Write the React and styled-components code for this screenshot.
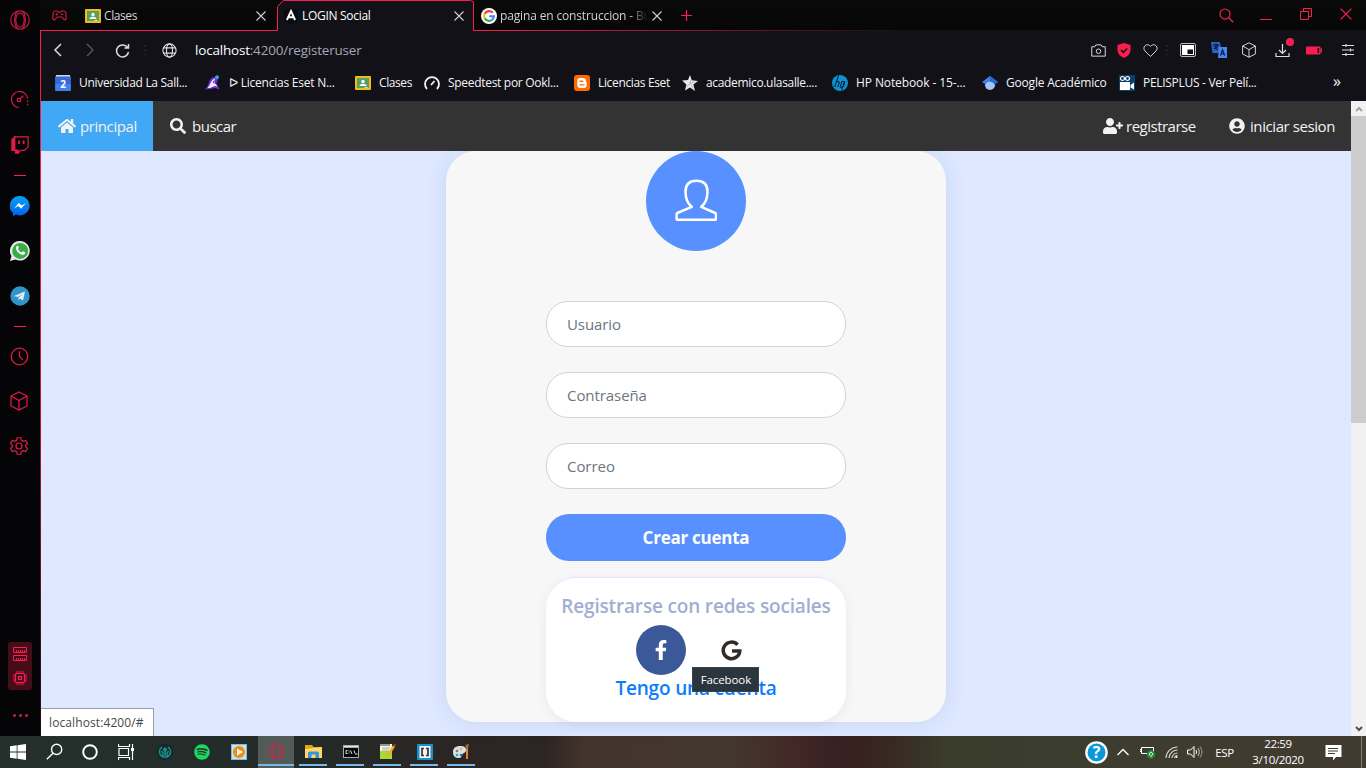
import React from 'react';
import styled, { createGlobalStyle } from 'styled-components';
import { FaHome, FaSearch, FaUserPlus, FaUserCircle, FaFacebookF, FaSpotify } from 'react-icons/fa';

const PINK = '#fa1e4e';

const Global = createGlobalStyle`
  *, *::before, *::after { box-sizing: border-box; }
  body { margin: 0; overflow: hidden; font-family: "Open Sans", "Noto Sans", sans-serif; }
  svg { display: block; flex: none; }
`;

const Screen = styled.div`
  width: 1366px;
  height: 768px;
  display: flex;
  flex-direction: column;
  overflow: hidden;
`;

const Browser = styled.div`
  flex: 1;
  min-height: 0;
  display: flex;
  background: #060608;
`;

const Sidebar = styled.aside`
  width: 40px;
  display: flex;
  flex-direction: column;
  background: #050507;
  color: #e31b47;
`;

const SideSlot = styled.div`
  height: ${(p) => p.$h}px;
  margin-top: ${(p) => p.$gap || 0}px;
  padding-right: ${(p) => p.$shift || 0}px;
  display: flex;
  align-items: center;
  justify-content: center;
`;

const Dash = styled.span`
  width: 12px;
  height: 1px;
  background: ${PINK};
`;

const Monitor = styled.div`
  margin: auto auto 0 8px;
  width: 24px;
  height: 48px;
  border-radius: 3px;
  background: #450c19;
  color: ${PINK};
  display: flex;
  flex-direction: column;
  align-items: center;
  justify-content: space-around;
`;

const MoreDots = styled.div`
  height: 46px;
  display: flex;
  align-items: center;
  justify-content: center;
  gap: 3px;
  padding-top: 5px;
  span { width: 3px; height: 3px; border-radius: 50%; background: #d01b42; }
`;

const Main = styled.div`
  flex: 1;
  min-width: 0;
  display: flex;
  flex-direction: column;
`;

const TabBar = styled.div`
  position: relative;
  height: 31px;
  display: flex;
  align-items: center;
  background: linear-gradient(#09090a, #070708);
  &::after {
    content: '';
    position: absolute;
    left: 0; right: 0; bottom: 0;
    height: 1px;
    background: linear-gradient(90deg, ${PINK} 0, ${PINK} 430px, #131218 860px);
  }
`;

const GxButton = styled.div`
  width: 38px;
  display: flex;
  justify-content: center;
  color: #cf1d44;
`;

const Tab = styled.div`
  position: relative;
  z-index: ${(p) => (p.$active ? 1 : 0)};
  width: ${(p) => p.$w}px;
  height: 31px;
  padding: 0 0 0 ${(p) => p.$pad}px;
  display: flex;
  align-items: center;
  color: ${(p) => (p.$active ? '#fff' : '#d2d2d5')};
  background: ${(p) => (p.$active ? '#121118' : 'transparent')};
  clip-path: ${(p) => (p.$active ? 'polygon(0 6px, 6px 0, 100% 0, 100% 100%, 0 100%)' : 'none')};
`;

const TabOutline = styled.svg`
  position: absolute;
  inset: 0;
`;

const TabTitle = styled.span`
  flex: 1;
  margin-left: 3px;
  overflow: hidden;
  white-space: nowrap;
  font-size: 12px;
  letter-spacing: ${(p) => p.$ls || 0}px;
  mask-image: ${(p) => (p.$fade ? 'linear-gradient(90deg, #000 128px, transparent 148px)' : 'none')};
`;

const TabClose = styled.span`
  width: 12px;
  margin-right: ${(p) => p.$right}px;
  color: #d0d0d4;
`;

const WindowButtons = styled.div`
  margin-left: auto;
  display: flex;
  color: ${PINK};
  > span { width: 40px; display: flex; justify-content: center; }
`;

const Toolbar = styled.div`
  height: 38px;
  display: flex;
  align-items: center;
  background: #121118;
  color: #dcdce0;
`;

const Slot = styled.div`
  position: relative;
  width: ${(p) => p.$w}px;
  height: 100%;
  display: flex;
  align-items: center;
  justify-content: center;
  color: ${(p) => p.$color || 'inherit'};
`;

const Url = styled.div`
  flex: 1;
  margin-left: 7px;
  font-size: 13.5px;
  letter-spacing: -0.2px;
  color: #a4a8b5;
  white-space: nowrap;
  b { font-weight: 400; color: #fff; }
`;

const Alert = styled.i`
  position: absolute;
  left: 21px;
  top: 7px;
  width: 8px;
  height: 8px;
  border-radius: 50%;
  background: ${PINK};
`;

const Bookmarks = styled.div`
  height: 32px;
  padding: 0 0 5px 14px;
  display: flex;
  align-items: center;
  background: #121118;
  color: #f4f4f6;
`;

const Bookmark = styled.div`
  width: ${(p) => p.$w}px;
  display: flex;
  align-items: center;
  gap: 8px;
  white-space: nowrap;
  font-size: 12px;
  line-height: 16px;
  letter-spacing: ${(p) => p.$ls}px;
`;

const More = styled.span`
  margin: -3px 25px 0 auto;
  font-size: 16px;
`;

const Viewport = styled.div`
  flex: 1;
  min-height: 0;
  display: flex;
`;

const Page = styled.div`
  position: relative;
  flex: 1;
  display: flex;
  flex-direction: column;
  background: #dee8ff;
`;

const Nav = styled.nav`
  position: relative;
  height: 50px;
  display: flex;
  background: #333;
`;

const NavLink = styled.a`
  width: ${(p) => p.$w}px;
  padding-left: ${(p) => p.$pad}px;
  margin-left: ${(p) => (p.$push ? 'auto' : 0)};
  display: flex;
  align-items: center;
  gap: ${(p) => p.$gap}px;
  font-size: 15px;
  letter-spacing: ${(p) => p.$ls || 0}px;
  white-space: nowrap;
  color: #f2f2f2;
  background: ${(p) => (p.$active ? '#40a8f5' : 'transparent')};
`;

const Card = styled.main`
  width: 500px;
  height: 571px;
  margin: 0 auto;
  display: flex;
  flex-direction: column;
  align-items: center;
  border-radius: 30px;
  background: #f7f7f7;
  box-shadow: 0 0 20px rgba(60, 110, 190, 0.14);
`;

const Avatar = styled.div`
  width: 100px;
  height: 100px;
  margin-bottom: 50px;
  padding-bottom: 3px;
  border-radius: 50%;
  background: #5891ff;
  display: flex;
  align-items: center;
  justify-content: center;
`;

const Field = styled.input`
  width: 300px;
  height: 46px;
  margin: 0 0 25px;
  padding: 0 20px 1px;
  border: 1px solid #ced4da;
  border-radius: 22px;
  outline: none;
  background: #fff;
  font: 15px "Open Sans", sans-serif;
  letter-spacing: ${(p) => p.$ls || 0}px;
  &::placeholder { color: #6c757d; opacity: 1; }
`;

const Submit = styled.button`
  width: 300px;
  height: 47px;
  margin: 0 0 16px;
  padding: 0;
  border: 0;
  border-radius: 23px;
  background: #5891ff;
  color: #fff;
  font: 700 17px "Open Sans", sans-serif;
  letter-spacing: -0.25px;
`;

const Social = styled.section`
  width: 300px;
  height: 145px;
  padding-top: 15px;
  display: flex;
  flex-direction: column;
  align-items: center;
  border-radius: 30px;
  border-top: 1px solid #dee8ff;
  background: #fff;
  box-shadow: 0 3px 12px rgba(0, 0, 0, 0.06);
`;

const SocialTitle = styled.h2`
  margin: 0;
  height: 32px;
  line-height: 26px;
  font-size: 19px;
  font-weight: 600;
  letter-spacing: -0.17px;
  white-space: nowrap;
  color: #a2aed0;
`;

const SocialRow = styled.div`
  display: flex;
  gap: 20px;
`;

const SocialButton = styled.a`
  width: 50px;
  height: 50px;
  border-radius: 50%;
  display: flex;
  align-items: center;
  justify-content: center;
  background: ${(p) => p.$bg};
  color: ${(p) => p.$fg};
`;

const AccountLink = styled.a`
  position: relative;
  line-height: 26px;
  font-size: 19px;
  font-weight: 600;
  letter-spacing: -0.17px;
  white-space: nowrap;
  color: #0a7cff;
`;

const Tooltip = styled.div`
  position: absolute;
  left: 77px;
  top: -8px;
  width: 67px;
  height: 25px;
  border: 1px solid #3a444d;
  background: #2b353d;
  color: #fff;
  font-size: 11.5px;
  font-weight: 400;
  letter-spacing: -0.1px;
  line-height: 23px;
  text-align: center;
`;

const Status = styled.div`
  position: absolute;
  left: 0;
  bottom: 0;
  width: 113px;
  height: 28px;
  padding-left: 8px;
  border: solid #979ca8;
  border-width: 1px 1px 0 0;
  background: #fff;
  color: #484848;
  font-size: 12px;
  line-height: 28px;
  letter-spacing: 0.1px;
`;

const Edge = styled.div`
  width: 1px;
  background: linear-gradient(${PINK} 0, #d61c45 45%, #4a1020 85%, #1d0a10 100%);
`;

const Scrollbar = styled.div`
  width: 15px;
  display: flex;
  flex-direction: column;
  background: #f1f1f1;
`;

const ScrollArrow = styled.div`
  height: 15px;
  display: flex;
  align-items: center;
  justify-content: center;
  color: ${(p) => p.$c};
`;

const Thumb = styled.div`
  height: 307px;
  margin-bottom: auto;
  background: #cdcdcd;
`;

const Taskbar = styled.footer`
  height: 32px;
  display: flex;
  align-items: center;
  color: #fff;
  background: linear-gradient(90deg, #25302c 0, #232b28 300px, #2a2624 440px, #2c2523 545px, #43352b 585px, #44372e 730px,
    #432927 790px, #3a2122 830px, #38201f 860px, #382c23 900px, #393c2b 945px, #3b3d2f 1080px, #403b2f 1250px, #403a30 1366px);
`;

const Task = styled.div`
  position: relative;
  width: ${(p) => p.$w || 37}px;
  height: 32px;
  margin-left: ${(p) => p.$gap || 0}px;
  padding-bottom: 1px;
  display: flex;
  align-items: center;
  justify-content: center;
  background: ${(p) => (p.$active ? '#525b58' : 'transparent')};
  &::after {
    content: '';
    position: absolute;
    bottom: 2px;
    left: ${(p) => (p.$active ? 0 : 4)}px;
    right: ${(p) => (p.$active ? 0 : 5)}px;
    height: 2px;
    background: ${(p) => (p.$open ? '#76b9ed' : 'transparent')};
  }
`;

const Tray = styled.div`
  margin-left: auto;
  height: 32px;
  display: flex;
  align-items: center;
`;

const Lang = styled.span`
  width: 37px;
  text-align: center;
  font-size: 11.5px;
  letter-spacing: -0.3px;
`;

const Clock = styled.div`
  width: 70px;
  height: 32px;
  font-size: 11.5px;
  line-height: 16px;
  letter-spacing: -0.35px;
  text-align: center;
`;

const ShowDesktop = styled.div`
  width: 5px;
  height: 32px;
  border-left: 1px solid #817d75;
`;

const Stroke = ({ s = 16, w = 1.3, vb = 20, children, ...rest }) => (
  <svg width={s} height={s} viewBox={`0 0 ${vb} ${vb}`} fill="none" stroke="currentColor" strokeWidth={w} {...rest}>{children}</svg>
);

const OperaIcon = ({ s = 20, c = PINK }) => (
  <svg width={s} height={s} viewBox="0 0 20 20" fill="none" stroke={c} strokeWidth="1.1">
    <circle cx="10" cy="10" r="9.3" /><ellipse cx="10" cy="10" rx="4.200" ry="7.300" />
    <path d="M8 .9C3.700 3.200 3.400 16 8.200 19M12 .9c4.300 2.300 4.600 15.100-.2 18.100" />
  </svg>
);

const Close = ({ s = 10, w = 1.1 }) => (
  <Stroke s={s} vb={10} w={w}><path d="M.5.5l9 9M9.500.5l-9 9" /></Stroke>
);

const Cube = ({ s }) => (
  <Stroke s={s} w={1.2}><path d="M10 1l8 4v10l-8 4-8-4V5zM2 5l8 4.500L18 5M10 9.500V19" /></Stroke>
);

const ClassroomIcon = () => (
  <svg width="16" height="16" viewBox="0 0 16 16">
    <rect y="1" width="16" height="14" rx="1" fill="#f5ba15" /><rect x="2" y="3" width="12" height="10" fill="#57a063" />
    <circle cx="8" cy="6.500" r="1.700" fill="#fff" /><path d="M4.500 11c0-3 7-3 7 0z" fill="#fff" /><path d="M9.500 12h3v1h-3z" fill="#d5e9d8" />
  </svg>
);

const GoogleIcon = () => (
  <svg width="16" height="16" viewBox="0 0 16 16" fill="none" strokeWidth="2.100">
    <circle cx="8" cy="8" r="8" fill="#fff" />
    <path d="M11.700 4.700A4.900 4.900 0 0 0 3.700 5.800" stroke="#ea4335" />
    <path d="M3.700 5.800a4.900 4.900 0 0 0 0 4.500" stroke="#fbbc05" />
    <path d="M3.700 10.300a4.900 4.900 0 0 0 7.400 1.400" stroke="#34a853" />
    <path d="M11.100 11.700A4.600 4.600 0 0 0 12.800 8.200H8.200" stroke="#4285f4" />
  </svg>
);

const AngularIcon = () => (
  <svg width="16" height="16" viewBox="0 0 16 16">
    <path d="M8 0l7.500 2.700-1.200 10L8 16l-6.300-3.300L.5 2.700z" fill="#080b12" />
    <path d="M3.900 12L8 3l4.100 9M5.500 9.200h5" fill="none" stroke="#fff" strokeWidth="1.900" />
  </svg>
);

const CalendarIcon = () => (
  <svg width="16" height="16" viewBox="0 0 16 16">
    <rect x="1" width="14" height="5" fill="#d5d8df" /><path d="M0 1.500h16l-.3 14.500H.3z" fill="#356ad6" /><path d="M.2 9h15.600l-.2 7H.4z" fill="#417ff0" />
    <text x="8" y="12.500" fontSize="10" fontWeight="700" fill="#fff" textAnchor="middle">2</text>
  </svg>
);

const WizardIcon = () => (
  <svg width="16" height="16" viewBox="0 0 16 16">
    <path d="M0 14.500Q3 12 4 7q1.500-5 6-5l3 2-1.500 4 3 6.500-5-1.500-4 1z" fill="#6a2fd0" />
    <path d="M6 7q1-3 4-3.500L9.500 8l3 3.500-3-.5L5 13H2.500Q5 10.500 6 7z" fill="#f2ecff" />
    <path d="M7.500 6.500L10 5l-1 4z" fill="#8a3bd8" /><circle cx="12" cy="2.200" r="1.900" fill="#27aee5" />
  </svg>
);

const SpeedtestIcon = () => (
  <Stroke s={16} vb={16} w={1.8}><path d="M3 14A7 7 0 1 1 13 14M7 10l3.500-4" /></Stroke>
);

const BloggerIcon = () => (
  <svg width="16" height="16" viewBox="0 0 16 16">
    <rect width="16" height="16" rx="3" fill="#ff6a00" />
    <path d="M6 3h3a3 3 0 0 1 3 3v.5q0 .6.7.8v2.700a3 3 0 0 1-3 3H6.300A3 3 0 0 1 3.300 10V6A3 3 0 0 1 6 3z" fill="#fff" />
    <path d="M6 6.200h2.700M6 9.900h4" stroke="#ff6a00" strokeWidth="1.400" strokeLinecap="round" />
  </svg>
);

const StarIcon = () => (
  <svg width="16" height="16" viewBox="0 0 16 16">
    <path d="M8 0l1.800 5.300L16 6l-4.600 3.600L13 16l-5-3.600L3 15.500l1.400-6L0 5.500l6-.4z" fill="#e9e9ea" />
    <path d="M8 8l1-3M8 8l5-1M8 8l3 5M8 8l-3 4" stroke="#999" strokeWidth=".6" />
  </svg>
);

const HpIcon = () => (
  <svg width="16" height="16" viewBox="0 0 16 16" fill="none">
    <circle cx="8" cy="8" r="8" fill="#0a93d3" />
    <path d="M6.500.5L2.700 12M4.600 6.500h1.600q1.400 0 1 1.300L5.800 12M9.500 15.500l3-9M9.700 6.500h2q1.400 0 1 1.300L11.600 11q-.4 1.200-1.600 1.200H8l2-5.700" stroke="#121118" strokeWidth="1" />
  </svg>
);

const ScholarIcon = () => (
  <svg width="16" height="16" viewBox="0 0 16 16">
    <circle cx="8" cy="10" r="5" fill="#a5c4fa" /><path d="M8 1l8 6-3.500 2.200a5 5 0 0 0-9 0L0 7z" fill="#427fe5" />
    <path d="M8 1l8 6-3.500 2.200Q11 6.500 8 6.500z" fill="#2b67cc" />
  </svg>
);

const CameraFilmIcon = () => (
  <svg width="16" height="16" viewBox="0 0 16 16">
    <rect width="16" height="16" fill="#08426b" /><circle cx="3.500" cy="3.500" r="2" fill="none" stroke="#fff" strokeWidth="1.200" />
    <circle cx="8.500" cy="3.500" r="2" fill="none" stroke="#fff" strokeWidth="1.200" />
    <path d="M1 7h10v8H1zM11.500 10L15 7.500v7l-3.500-2z" fill="#fff" />
  </svg>
);

const bookmarks = [
  [CalendarIcon, 'Universidad La Sall...', 150, -0.3],
  [WizardIcon, 'ᐅ Licencias Eset N...', 150, -0.23],
  [ClassroomIcon, 'Clases', 69, -0.4],
  [SpeedtestIcon, 'Speedtest por Ookl...', 150, -0.3],
  [BloggerIcon, 'Licencias Eset', 108, -0.35],
  [StarIcon, 'academico.ulasalle....', 150, -0.33],
  [HpIcon, 'HP Notebook - 15-...', 150, -0.1],
  [ScholarIcon, 'Google Académico', 137, -0.2],
  [CameraFilmIcon, 'PELISPLUS - Ver Pelí...', 150, -0.3],
];

function SidePanel() {
  return (
    <Sidebar>
      <SideSlot $h={40}><OperaIcon s={20} c="#d41c43" /></SideSlot>
      <SideSlot $h={46} $gap={36} $shift={1}>
        <Stroke s={19}><path d="M9 18.500A8.500 8.500 0 1 1 18.500 9" /><path d="M18.500 11v6" strokeDasharray="1.500 2" /><circle cx="9.500" cy="10.500" r="1.800" /><path d="M11 9l3-3" /></Stroke>
      </SideSlot>
      <SideSlot $h={46}>
        <Stroke s={18}><path d="M4 1h15v11l-4 4h-4l-3 3v-3H4z" /><path d="M1 4l3-3v15h4v3H5v-3H1z" fill="currentColor" /><path d="M9 5v4M14 5v4" strokeWidth="2" /></Stroke>
      </SideSlot>
      <SideSlot $h={15}><Dash /></SideSlot>
      <SideSlot $h={46}>
        <svg width="20" height="20" viewBox="0 0 20 20">
          <defs><linearGradient id="ms" x2="0" y2="1"><stop stopColor="#08a1f5" /><stop offset="1" stopColor="#0062f0" /></linearGradient></defs>
          <path d="M10 0a9.700 9.700 0 1 1-4 18.600L3 20v-3A9.800 9.800 0 0 1 10 0z" fill="url(#ms)" /><path d="M4 12.500l4.800-5.500 3 2.500L16 7l-4.800 5.700L8.300 10z" fill="#fff" />
        </svg>
      </SideSlot>
      <SideSlot $h={44}>
        <svg width="20" height="20" viewBox="0 0 20 20">
          <path d="M10 0a9.800 9.800 0 1 1-4.600 18.500L0 20l1.500-5A9.800 9.800 0 0 1 10 0z" fill="#e8e9e8" /><circle cx="10.200" cy="9.900" r="8" fill="#3aad48" />
          <path d="M6.500 5.200c1-1 1.700-.5 2.300 1.500L8 8.200c.8 1.600 1.900 2.600 3.600 3.400l1.300-1.300c2.300.8 2.600 1.200 2.100 2.300-2 3.900-11-2.600-8.500-7.400z" fill="#fff" />
        </svg>
      </SideSlot>
      <SideSlot $h={46}>
        <svg width="20" height="20" viewBox="0 0 20 20">
          <circle cx="10" cy="10" r="9.700" fill="#2f95c9" /><path d="M4 10l11-4.500-2 9-3-2-1.500 1.700V11.500L13 8l-5.500 3z" fill="#e9eef2" />
        </svg>
      </SideSlot>
      <SideSlot $h={14}><Dash /></SideSlot>
      <SideSlot $h={46} $shift={1}><Stroke s={19}><circle cx="10" cy="10" r="8.700" /><path d="M10 4.500V10l3.500 3.500" /></Stroke></SideSlot>
      <SideSlot $h={44} $shift={2}><Cube s={20} /></SideSlot>
      <SideSlot $h={46} $shift={2}>
        <Stroke s={18} vb={24} w={1.6}>
          <circle cx="12" cy="12" r="4" />
          <path d="M9.500 1h5l.7 3.500 2.300 1.300 3.400-1.200 2.500 4.300-2.700 2.300v1.600l2.700 2.300-2.500 4.300-3.400-1.200-2.300 1.300-.7 3.500h-5l-.7-3.500-2.300-1.300-3.400 1.200L.6 15.100l2.700-2.300v-1.600L.6 8.900l2.500-4.300 3.400 1.200 2.300-1.300z" />
        </Stroke>
      </SideSlot>
      <Monitor>
        <Stroke s={14} vb={14} w={1}><path d="M.5.5h13v5H.5zM.5 8.500h13v5H.5zM3.500 3v2.500M5.500 3v2.500M7.500 3v2.500M9.500 3v2.500M11.500 3v2.500M3.500 11v2.500M5.500 11v2.500M7.500 11v2.500M9.500 11v2.500M11.500 11v2.500" /></Stroke>
        <Stroke s={14} vb={14} w={1.2}><rect x="2.500" y="2.500" width="9" height="9" rx="1" /><rect x="5.500" y="5.500" width="3" height="3" /><path d="M4 0v2.500M6 0v2.500M8 0v2.500M10 0v2.500M4 11.500V14M6 11.500V14M8 11.500V14M10 11.500V14M0 4h2.500M0 6h2.500M0 8h2.500M0 10h2.500M11.500 4H14M11.500 6H14M11.500 8H14M11.500 10H14" strokeWidth=".9" /></Stroke>
      </Monitor>
      <MoreDots><span /><span /><span /></MoreDots>
    </Sidebar>
  );
}

function Tabs() {
  return (
    <TabBar>
      <GxButton>
        <Stroke s={15} w={1.5}><path d="M4 4h3l1.500 1.500h3L13 4h3q2 0 2.500 3l.5 7q-1 2.500-3 1.500L13 12H7l-3 3.500q-2 1-3-1.500L1.500 7Q2 4 4 4z" /><path d="M6.300 7v3M4.800 8.500h3M12.200 8.500h3" /></Stroke>
      </GxButton>
      <Tab $w={199} $pad={7}><ClassroomIcon /><TabTitle $ls={-0.4}>Clases</TabTitle><TabClose $right={9}><Close /></TabClose></Tab>
      <Tab $w={197} $pad={6} $active>
        <TabOutline width="197" height="31" fill="none" stroke={PINK}><path d="M0 30.500H.5V6.500l6-6H193.500l3 1.500V31" /></TabOutline>
        <AngularIcon /><TabTitle $ls={-0.3}>LOGIN Social</TabTitle><TabClose $right={8}><Close /></TabClose>
      </Tab>
      <Tab $w={194} $pad={7}><GoogleIcon /><TabTitle $fade $ls={-0.15}>pagina en construccion - Búsqueda</TabTitle><TabClose $right={4}><Close /></TabClose></Tab>
      <Slot $w={37} $color={PINK}><Stroke s={11} vb={11} w={1.2}><path d="M5.500 0v11M0 5.500h11" /></Stroke></Slot>
      <WindowButtons>
        <span><Stroke s={15} w={1.6}><circle cx="8" cy="8" r="6.700" /><path d="M13 13l6 6" /></Stroke></span>
        <span><Stroke s={12} vb={12} w={1}><path d="M0 11.500h12" /></Stroke></span>
        <span><Stroke s={12} vb={12} w={1}><path d="M.5 3.500h8v8h-8zM3.500 3.500v-3h8v8h-3" /></Stroke></span>
        <span><Close s={12} w={1} /></span>
      </WindowButtons>
    </TabBar>
  );
}

function AddressBar() {
  return (
    <Toolbar>
      <Slot $w={33}><Stroke s={14} vb={14} w={1.5}><path d="M10 1L4 7l6 6" /></Stroke></Slot>
      <Slot $w={32} $color="#595961"><Stroke s={14} vb={14} w={1.3}><path d="M4 1l6 6-6 6" /></Stroke></Slot>
      <Slot $w={32}><Stroke s={15} vb={15} w={1.5}><path d="M13.500 9A6 6 0 1 1 12.500 4.500M13.500 1v4h-4" /></Stroke></Slot>
      <Slot $w={13} $color="#3a3942"><Stroke s={10} vb={10} w={1}><path d="M5 0v10" strokeDasharray="1.500 3" /></Stroke></Slot>
      <Slot $w={37}><Stroke s={15} w={1.5}><circle cx="10" cy="10" r="8.800" /><ellipse cx="10" cy="10" rx="4" ry="8.800" /><path d="M2 6.500h16M2 13.500h16" /></Stroke></Slot>
      <Url><b>localhost</b>:4200/registeruser</Url>
      <Slot $w={26}><Stroke s={15}><path d="M1 5h4l1.500-2.500h7L15 5h4v12.500H1z" /><circle cx="10" cy="11" r="3" /></Stroke></Slot>
      <Slot $w={26}>
        <svg width="14" height="15" viewBox="0 0 14 15"><path d="M7 0l6.500 2v5.500Q13 12.500 7 15 1 12.500.5 7.500V2z" fill={PINK} /><path d="M4 7l2.300 2.300L10.200 5.500" fill="none" stroke="#121118" strokeWidth="1.600" /></svg>
      </Slot>
      <Slot $w={26}><Stroke s={15}><path d="M10 18L2.500 10.500C-2 5 6-1 10 4.500 14-1 22 5 17.500 10.500z" /></Stroke></Slot>
      <Slot $w={8} $color="#3a3942"><Stroke s={10} vb={10} w={1}><path d="M5 0v10" strokeDasharray="1.500 3" /></Stroke></Slot>
      <Slot $w={34}>
        <svg width="16" height="14" viewBox="0 0 16 14"><rect x=".5" y=".5" width="15" height="13" rx="1.500" fill="none" stroke="#bbb" /><rect x="2" y="2" width="12" height="10" fill="#fff" /><rect x="7.500" y="6.500" width="5.500" height="4.500" fill="#111" /></svg>
      </Slot>
      <Slot $w={28}>
        <svg width="16" height="16" viewBox="0 0 16 16" fill="none"><path d="M0 0h9l1.500 11H1.500z" fill="#2a63c7" /><path d="M8 5h8v11H7z" fill="#4387f5" /><path d="M2 3h6M5 1.500V3M7 3q-1 3-4 4M3.500 4l3 4" stroke="#101018" strokeWidth="1.200" /><path d="M9.500 13.500L11.500 8l2.200 5.500M10 12h3" stroke="#101838" strokeWidth="1.200" /></svg>
      </Slot>
      <Slot $w={32}><Cube s={16} /></Slot>
      <Slot $w={34}><Stroke s={15} vb={15} w={1.2}><path d="M7.500 1v9M4 7l3.500 3.500L11 7M1 10v3.500h13V10" /></Stroke><Alert /></Slot>
      <Slot $w={30}><svg width="16" height="9" viewBox="0 0 16 9"><rect y=".5" width="14.500" height="8" rx="1" fill={PINK} /><path d="M11.500 2v5h1.700V2z" fill="#121118" /><path d="M14.500 2.500H16v4h-1.500z" fill={PINK} /></svg></Slot>
      <Slot $w={37}><Stroke s={12} vb={12} w={1.1}><path d="M0 1.500h12M0 6h12M0 10.500h12M4 0v3M8.500 4.500v3M4 9v3" /></Stroke></Slot>
    </Toolbar>
  );
}

function RegisterPage() {
  return (
    <Page>
      <Nav>
        <NavLink $active $w={112} $pad={17} $gap={4} $ls={-0.42}><FaHome size={18} />principal</NavLink>
        <NavLink $w={100} $pad={17} $gap={6} $ls={-0.5}><FaSearch size={16} />buscar</NavLink>
        <NavLink $push $w={126} $pad={17} $gap={3} $ls={-0.5}><FaUserPlus size={20} />registrarse</NavLink>
        <NavLink $w={139} $pad={17} $gap={5} $ls={-0.42}><FaUserCircle size={16} />iniciar sesion</NavLink>
      </Nav>
      <Card>
        <Avatar>
          <svg width="42" height="42" viewBox="0 0 42 42" fill="none" stroke="#fff" strokeWidth="2.500" strokeLinejoin="round">
            <path d="M16.800 27.800C12.500 24.500 10.500 19 10.500 12.500 10.500 5.500 14.500 1.700 21.500 1.700S32.500 5.500 32.500 12.500C32.500 19 30.500 24.500 26.200 27.800L40.200 34q.8.5.8 1.500v4.300q0 1-1 1H2.600q-1 0-1-1V35.500q0-1 .8-1.500z" />
          </svg>
        </Avatar>
        <Field placeholder="Usuario" $ls={-0.1} />
        <Field placeholder="Contraseña" $ls={-0.07} />
        <Field placeholder="Correo" $ls={-0.05} />
        <Submit>Crear cuenta</Submit>
        <Social>
          <SocialTitle>Registrarse con redes sociales</SocialTitle>
          <SocialRow>
            <SocialButton $bg="#3b5998" $fg="#fff"><FaFacebookF size={20} /></SocialButton>
            <SocialButton $bg="#fff" $fg="#332b28">
              <Stroke s={21} w={3.3}><path d="M15.800 4.500A7.900 7.900 0 1 0 17.900 10.500H10.500" /></Stroke>
            </SocialButton>
          </SocialRow>
          <AccountLink>Tengo una cuenta<Tooltip>Facebook</Tooltip></AccountLink>
        </Social>
      </Card>
      <Status>localhost:4200/#</Status>
    </Page>
  );
}

function WindowsTaskbar() {
  return (
    <Taskbar>
      <Task $w={36}><svg width="16" height="16" viewBox="0 0 16 16" fill="#fff"><path d="M0 2.300l6.700-1v6.300H0zM7.500 1.200L16 0v7.600H7.500zM0 8.400h6.700v6.300l-6.700-1zM7.500 8.400H16V16l-8.500-1.200z" /></svg></Task>
      <Task $w={36}><Stroke s={17} w={1.6}><circle cx="12.500" cy="7.500" r="6" /><path d="M8.200 12L1 19" /></Stroke></Task>
      <Task $w={36}><Stroke s={16} w={2.4}><circle cx="10" cy="10" r="8.500" /></Stroke></Task>
      <Task $w={36}><Stroke s={16} vb={16} w={1.2}><path d="M1 4.500h9.500v7H1zM.5 0v2.500h11V0M.5 16v-2.500h11V16M14.500 0v16" /><path d="M13 4h3v3h-3z" fill="currentColor" stroke="none" /></Stroke></Task>
      <Task $gap={2}>
        <svg width="16" height="16" viewBox="0 0 16 16" fill="none" stroke="#179287" strokeWidth="1.500"><circle cx="8" cy="8" r="8" fill="#172432" stroke="none" /><path d="M5 3C1 6 2 11 6 13V9L4.500 7M11 3c4 3 3 8-1 10V9l1.500-2M8 7v7" /><circle cx="8" cy="5.500" r="1.300" fill="#179287" /></svg>
      </Task>
      <Task><FaSpotify size={16} color="#1ed760" /></Task>
      <Task>
        <svg width="16" height="16" viewBox="0 0 16 16"><rect width="16" height="16" fill="#78bce9" /><rect x="1" y="1" width="14" height="14" fill="#c8e2f3" /><circle cx="8" cy="8" r="6" fill="#f58a0c" /><path d="M6 4.500v7L12 8z" fill="#fff" /></svg>
      </Task>
      <Task $w={36} $gap={1} $open $active><OperaIcon s={17} c="#cf2548" /></Task>
      <Task $gap={1} $open>
        <svg width="17" height="15" viewBox="0 0 17 15"><path d="M0 1h7l1.500 2H17v11H0z" fill="#e5a50c" /><path d="M0 5l8-1 9-1v11H0z" fill="#ffd766" /><path d="M3 14V8.500l1.500-1h8L14 8.500V14h-3.500v-3.500h-4V14z" fill="#3296e0" /></svg>
      </Task>
      <Task $open>
        <svg width="16" height="13" viewBox="0 0 16 13"><rect width="16" height="13" fill="#a9aaad" /><rect x="1" y="3" width="14" height="9" fill="#050505" /><path d="M1 1h14v1H1z" fill="#e6e6e6" /><path d="M4.500 5.500H3v3h1.500M6 5.500v1M6 7.500v1M7.500 5.500l1.500 3.500M11 5.500l1 3M12 9h2.500" stroke="#fff" fill="none" strokeWidth=".9" /></svg>
      </Task>
      <Task $open>
        <svg width="17" height="17" viewBox="0 0 17 17"><path d="M1 1h12v15H1z" fill="#f5f7e9" /><path d="M1 8h12v8H1z" fill="#a6d838" /><path d="M2 1v2M4 1v2M6 1v2M8 1v2M10 1v2" stroke="#333" /><path d="M3 5h8M3 7h7" stroke="#aaa" /><path d="M15 3L8.500 13" stroke="#f1ac20" strokeWidth="2.500" /><circle cx="15.500" cy="2" r="1.500" fill="#b32c23" /></svg>
      </Task>
      <Task $open>
        <svg width="16" height="16" viewBox="0 0 16 16"><rect width="16" height="16" rx="1" fill="#1c8fd3" /><rect x="2.500" y="2" width="11" height="12" fill="#f4f4f4" /><path d="M7 4.500H5v7h2M9 4.500h2v7H9" fill="none" stroke="#333" strokeWidth="1.700" /></svg>
      </Task>
      <Task $open>
        <svg width="17" height="16" viewBox="0 0 17 16"><path d="M7 2c6-1 8 5 4 7s-1 5-5 5-6-2-6-6 3-6 7-6z" fill="#cfe4ee" /><circle cx="4" cy="7" r="1.300" fill="#df5834" /><circle cx="8" cy="5" r="1.300" fill="#f3b922" /><circle cx="4" cy="11" r="1.300" fill="#4ba943" /><circle cx="8" cy="11" r="1.300" fill="#3172be" /><path d="M14 5v10" stroke="#e98129" strokeWidth="2" /><path d="M12.500 1l3.500-1-1 5h-2z" fill="#a56b41" /></svg>
      </Task>
      <Tray>
        <Slot $w={26}>
          <svg width="23" height="23" viewBox="0 0 23 23"><circle cx="11.500" cy="11.500" r="11.300" fill="#fff" /><circle cx="11.500" cy="11.500" r="9" fill="#0b98d8" /><text x="11.500" y="17.300" fontSize="16" fontWeight="700" fill="#fff" textAnchor="middle">?</text></svg>
        </Slot>
        <Slot $w={27}><Stroke s={12} vb={12} w={1.3}><path d="M.5 9L6 3.500 11.500 9" /></Stroke></Slot>
        <Slot $w={24}>
          <svg width="16" height="14" viewBox="0 0 16 14" fill="none"><path d="M1.500 2.500h12v6h-12zM0 4.500h1.500v2H0z" stroke="#fff" /><circle cx="11" cy="9.500" r="4.300" fill="#168f2b" /><path d="M11 12V9.500m-1.800.8Q9 7.500 11 7q2 .5 1.800 3.300" stroke="#fff" strokeWidth=".9" /></svg>
        </Slot>
        <Slot $w={24}>
          <Stroke s={14} vb={14} w={1.1}><path d="M1 13A11.500 11.500 0 0 1 12.500 2M4 13a8.500 8.500 0 0 1 8.500-8M7 13a5.500 5.500 0 0 1 5.500-5M9.500 13a3 3 0 0 1 3-2.500" opacity=".8" /><circle cx="11.500" cy="12" r="1" fill="currentColor" stroke="none" /></Stroke>
        </Slot>
        <Slot $w={22}>
          <svg width="17" height="14" viewBox="0 0 17 14" fill="none" stroke="#fff"><path d="M.5 5h3l3.500-3.500v11L3.500 9h-3z" /><path d="M9 5q1.300 2 0 4" /><path d="M11 3q3 4 0 8" opacity=".7" /><path d="M13 1.500q4 5.500 0 11" opacity=".45" /></svg>
        </Slot>
        <Lang>ESP</Lang>
        <Clock>22:59<br />3/10/2020</Clock>
        <Slot $w={41}>
          <svg width="17" height="17" viewBox="0 0 17 17"><path d="M.5 1h16v12H11l-3 3.500V13H.5z" fill="#fff" /><path d="M3 4.500h10M3 7h10M3 9.500h7" stroke="#403b2f" /></svg>
        </Slot>
        <Slot $w={7} />
        <ShowDesktop />
      </Tray>
    </Taskbar>
  );
}

export default function App() {
  return (
    <>
      <Global />
      <Screen>
        <Browser>
          <SidePanel />
          <Main>
            <Tabs />
            <Viewport>
              <Edge />
              <Main>
                <AddressBar />
                <Bookmarks>
                  {bookmarks.map(([Icon, label, w, ls]) => (
                    <Bookmark key={label} $w={w} $ls={ls}><Icon />{label}</Bookmark>
                  ))}
                  <More>»</More>
                </Bookmarks>
                <Viewport>
                  <RegisterPage />
                  <Scrollbar>
                    <ScrollArrow $c="#a3a3a3"><Stroke s={8} vb={8} w={2}><path d="M1 6l3-3 3 3" /></Stroke></ScrollArrow>
                    <Thumb />
                    <ScrollArrow $c="#505050"><Stroke s={8} vb={8} w={2}><path d="M1 2l3 3 3-3" /></Stroke></ScrollArrow>
                  </Scrollbar>
                </Viewport>
              </Main>
            </Viewport>
          </Main>
        </Browser>
        <WindowsTaskbar />
      </Screen>
    </>
  );
}
